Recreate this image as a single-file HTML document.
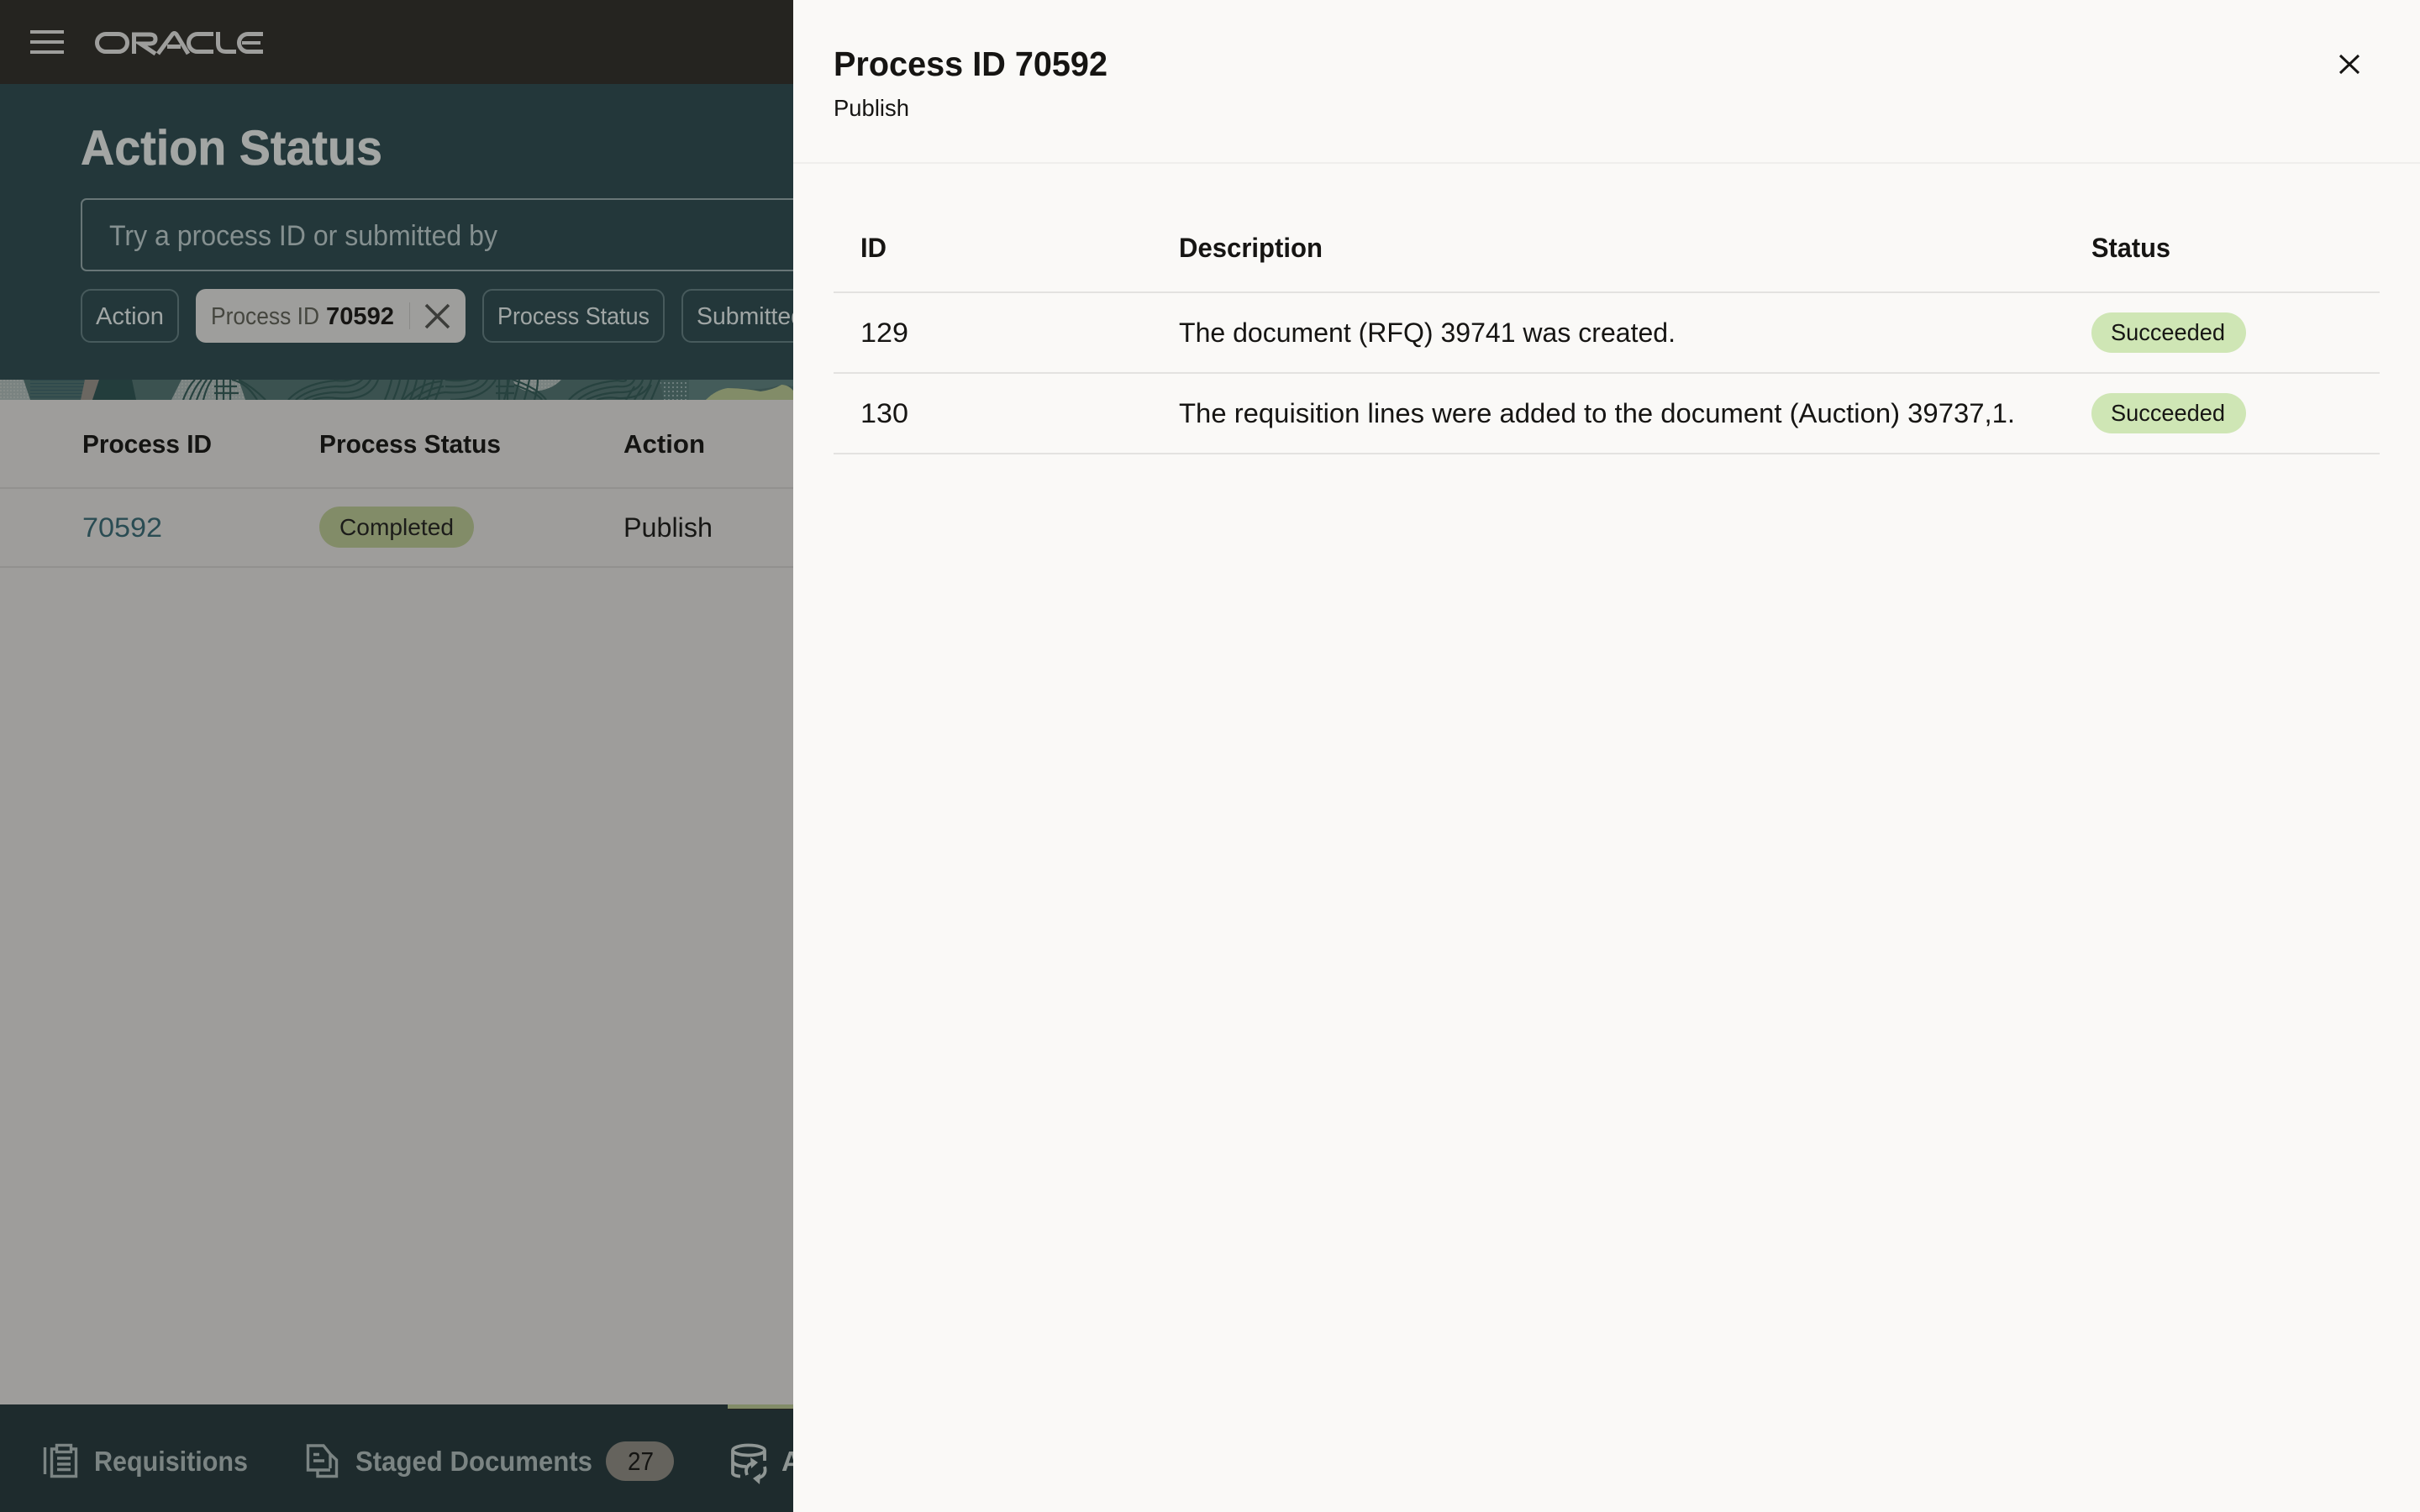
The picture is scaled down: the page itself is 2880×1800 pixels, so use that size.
<!DOCTYPE html>
<html lang="en"><head><meta charset="utf-8"><title>Action Status</title>
<style>
html,body{margin:0;padding:0;width:2880px;height:1800px;overflow:hidden;background:#9e9d9b}
svg{display:block}
text{font-family:"Liberation Sans",sans-serif;}
.b{font-weight:700}
</style></head><body>
<svg width="2880" height="1800" viewBox="0 0 2880 1800" xmlns="http://www.w3.org/2000/svg">
<defs>
<clipPath id="band"><rect x="0" y="452" width="944" height="24"/></clipPath>
<pattern id="dots" width="4" height="4" patternUnits="userSpaceOnUse"><rect width="4" height="4" fill="#7a8381"/><rect width="2" height="2" fill="#868c89"/></pattern>
<pattern id="dots2" width="5" height="5" patternUnits="userSpaceOnUse"><rect width="5" height="5" fill="#3f5755"/><rect width="2" height="2" fill="#6b7c7b"/></pattern>
<pattern id="dots3" width="4" height="4" patternUnits="userSpaceOnUse"><rect width="4" height="4" fill="#395150"/><rect y="0" width="4" height="1" fill="#2c474b"/></pattern>
</defs>
<rect width="2880" height="1800" fill="#9e9d9b"/>
<!-- top bar -->
<rect width="944" height="100" fill="#252420"/>
<rect x="36" y="36" width="40" height="4" fill="#9e9e9c"/><rect x="36" y="48" width="40" height="4" fill="#9e9e9c"/><rect x="36" y="60" width="40" height="4" fill="#9e9e9c"/>
<g fill="none" stroke="#9e9e9c" stroke-width="5">
<title>ORACLE</title>
<rect x="115.500" y="40.500" width="36" height="21" rx="10.500"/>
<path d="M159.500 64V41H178Q185 41 185 46.500Q185 52 178 52H167L185 64"/>
<path d="M188 64L205 41Q207.500 38 210 41L224 64"/>
<path d="M199 55.500H215"/>
<path d="M254 40.500H235a10.500 10.500 0 0 0 0 21H254"/>
<path d="M259.500 38V52Q259.500 61.500 269 61.500H281"/>
<path d="M313 40.500H295a10.500 10.500 0 0 0 0 21H313"/>
<path d="M288 51H310" stroke-width="4"/>
</g>
<!-- teal header -->
<rect y="100" width="944" height="352" fill="#23373a"/>
<text class="b" x="96" y="196" font-size="58" fill="#a3a6a4" stroke="#a3a6a4" stroke-width=".6" textLength="359" lengthAdjust="spacingAndGlyphs">Action Status</text>
<rect x="97" y="237" width="900" height="85" rx="6" fill="none" stroke="#687677" stroke-width="2"/>
<text x="130" y="292" font-size="34" fill="#859090" textLength="462" lengthAdjust="spacingAndGlyphs">Try a process ID or submitted by</text>
<!-- chips -->
<rect x="97" y="345" width="115" height="62" rx="11" fill="none" stroke="#475a5c" stroke-width="2"/>
<text x="114" y="386" font-size="29" fill="#a0a6a5" textLength="81" lengthAdjust="spacingAndGlyphs">Action</text>
<rect x="233" y="344" width="321" height="64" rx="12" fill="#9e9e9c"/>
<text x="251" y="386" font-size="29" fill="#45463f" textLength="129" lengthAdjust="spacingAndGlyphs">Process ID</text>
<text class="b" x="388" y="386" font-size="29" fill="#161513" textLength="81" lengthAdjust="spacingAndGlyphs">70592</text>
<rect x="487" y="360" width="1" height="32" fill="#8a8a88"/>
<path d="M507 363L534 390M534 363L507 390" stroke="#3c3d3a" stroke-width="3.600" fill="none"/>
<rect x="575" y="345" width="215" height="62" rx="11" fill="none" stroke="#475a5c" stroke-width="2"/>
<text x="592" y="386" font-size="29" fill="#a0a6a5" textLength="181" lengthAdjust="spacingAndGlyphs">Process Status</text>
<rect x="812" y="345" width="200" height="62" rx="11" fill="none" stroke="#475a5c" stroke-width="2"/>
<text x="829" y="386" font-size="29" fill="#a0a6a5" textLength="166" lengthAdjust="spacingAndGlyphs">Submitted by</text>
<!-- pattern band -->
<g clip-path="url(#band)">
<rect y="452" width="944" height="24" fill="#3b5250"/>
<rect x="36" y="452" width="64" height="24" fill="url(#dots3)"/>
<path d="M0 452H28L36 476H0Z" fill="url(#dots)"/>
<path d="M101 452H118L110 476H96Z" fill="#6b6761"/>
<path d="M110 476L118 452H157L162 476Z" fill="#233d3c"/>
<path d="M204 476L216 452H284L292 476Z" fill="url(#dots)"/>
<path d="M610 452H668Q655 466 630 466Q615 464 610 452Z" fill="url(#dots)"/>
<path d="M785 452H880L840 476H790Z" fill="url(#dots2)"/>
<path d="M820 452H944V460L930 458Q905 466 880 462Q855 460 840 476H820Z" fill="#445c5a"/>
<path d="M840 476Q852 464 866 462Q885 462 905 466Q920 464 930 458Q938 458 944 465V476Z" fill="#828c68"/>
<g fill="none" stroke="#27423f" stroke-width="2.200">
<path d="M218 476Q224 460 232 452M226 476Q232 460 240 452M234 476Q240 460 246 452M242 476Q246 460 252 452"/>
<path d="M258 452V476M266 452V476M274 452V476M255 460H282M255 468H284"/>
<path d="M284 452Q300 460 316 476M276 452Q294 456 306 476"/>
<path d="M343 476Q362 456 400 453M352 476Q368 462 400 460M362 476Q376 468 400 467M372 476Q384 472 400 474"/>
<path d="M400 453Q415 455 425 448M400 460Q425 462 434 448M400 467Q432 470 442 450M400 474Q440 478 450 452"/>
<path d="M458 476Q464 462 466 452M468 476Q474 462 476 452"/>
<path d="M478 476Q484 462 486 452M488 476Q494 462 496 452M498 476Q504 462 506 452M508 476Q514 462 516 452M518 476Q524 462 526 452"/>
<path d="M480 476Q500 456 525 454M490 476Q510 462 528 460M500 476Q518 468 530 467"/>
<path d="M530 452Q550 455 560 450M530 460Q560 462 570 452M530 467Q570 470 580 452M536 476Q575 476 590 452M600 476Q604 462 606 452M612 476Q616 462 618 452M624 476Q628 462 630 452M636 476Q640 462 640 452"/>
<path d="M594 452V476M604 452V476M590 460H612M590 468H612"/>
<path d="M610 452Q640 462 650 476M612 458Q640 468 645 476"/>
<path d="M677 476Q695 456 735 453M688 476Q705 462 735 460M698 476Q715 468 735 467M710 476Q722 472 735 474"/>
<path d="M735 453Q745 455 745 452M735 460Q750 462 755 452M735 467Q760 468 765 452M735 474Q770 475 775 452M745 476L755 460M755 476L765 460M765 476L775 458M775 476L785 452"/>
</g>
</g>
<!-- results table -->
<text class="b" x="98" y="539" font-size="31" fill="#141412" textLength="154" lengthAdjust="spacingAndGlyphs">Process ID</text>
<text class="b" x="380" y="539" font-size="31" fill="#141412" textLength="216" lengthAdjust="spacingAndGlyphs">Process Status</text>
<text class="b" x="742" y="539" font-size="31" fill="#141412" textLength="97" lengthAdjust="spacingAndGlyphs">Action</text>
<rect y="580" width="944" height="2" fill="#92918f"/>
<text x="98" y="639" font-size="32" fill="#2a4c53" textLength="95" lengthAdjust="spacingAndGlyphs">70592</text>
<rect x="380" y="603" width="184" height="49" rx="24.500" fill="#828c68"/>
<text x="404" y="637" font-size="28" fill="#1c1c1a" textLength="136" lengthAdjust="spacingAndGlyphs">Completed</text>
<text x="742" y="639" font-size="32" fill="#171715" textLength="106" lengthAdjust="spacingAndGlyphs">Publish</text>
<rect y="674" width="944" height="2" fill="#92918f"/>
<!-- footer -->
<rect y="1672" width="944" height="128" fill="#1e2b2d"/>
<rect x="866" y="1672" width="78" height="5" fill="#828c68"/><rect x="866" y="1677" width="78" height="1" fill="#252420"/>
<g fill="none" stroke="#7b8483" stroke-width="3.400">
<path d="M53.500 1723V1755"/>
<path d="M66 1725H61.500V1757.500H90.500V1725H86"/>
<rect x="67.500" y="1720.500" width="17" height="8"/>
<path d="M68 1736H84M68 1743H84M68 1749.500H84" stroke-width="3.600"/>
<path d="M393 1748V1731L385 1721H366.500V1750H393M378 1750V1757.500H400.500V1738L393 1731"/>
<path d="M373 1731.500H380M373 1739H386"/>
</g>
<text class="b" x="112" y="1751" font-size="33" fill="#7b8483" textLength="183" lengthAdjust="spacingAndGlyphs">Requisitions</text>
<text class="b" x="423" y="1751" font-size="33" fill="#7b8483" textLength="282" lengthAdjust="spacingAndGlyphs">Staged Documents</text>
<rect x="721" y="1716" width="81" height="47" rx="23.500" fill="#65635d"/>
<text x="747" y="1750" font-size="31" fill="#141412" textLength="31" lengthAdjust="spacingAndGlyphs">27</text>
<g fill="none" stroke="#8f9694" stroke-width="3.800">
<ellipse cx="891" cy="1726.500" rx="19" ry="6"/>
<path d="M872 1727V1754Q873 1757 881 1757.500M910 1727V1739"/>
<path d="M872 1741Q878 1746 888 1746"/>
<path d="M889 1756Q885 1745 897 1741"/>
<path d="M910 1746Q913 1757 901 1760"/>
</g>
<path d="M893 1735L902 1741L894 1748ZM905 1754L896 1760L904 1767Z" fill="#8f9694"/>
<text class="b" x="930" y="1751" font-size="33" fill="#8f9694">A</text>
<!-- drawer -->
<rect x="944" y="0" width="1936" height="1800" fill="#faf9f7"/>
<text class="b" x="992" y="90" font-size="41" fill="#161513" textLength="326" lengthAdjust="spacingAndGlyphs">Process ID 70592</text>
<text x="992" y="138" font-size="28" fill="#161513" textLength="90" lengthAdjust="spacingAndGlyphs">Publish</text>
<path d="M2785 66L2807 87M2807 66L2785 87" stroke="#161513" stroke-width="3" fill="none"/>
<rect x="944" y="193" width="1936" height="2" fill="#efeeec"/>
<text class="b" x="1024" y="306" font-size="32" fill="#161513" textLength="31" lengthAdjust="spacingAndGlyphs">ID</text>
<text class="b" x="1403" y="306" font-size="32" fill="#161513" textLength="171" lengthAdjust="spacingAndGlyphs">Description</text>
<text class="b" x="2489" y="306" font-size="32" fill="#161513" textLength="94" lengthAdjust="spacingAndGlyphs">Status</text>
<rect x="992" y="347" width="1840" height="2" fill="#e3e2e0"/>
<text x="1024" y="407" font-size="32" fill="#161513" textLength="57" lengthAdjust="spacingAndGlyphs">129</text>
<text x="1403" y="407" font-size="32" fill="#161513" textLength="591" lengthAdjust="spacingAndGlyphs">The document (RFQ) 39741 was created.</text>
<rect x="2489" y="372" width="184" height="48" rx="24" fill="#cfe6b5"/>
<text x="2512" y="405" font-size="28" fill="#161513" textLength="136" lengthAdjust="spacingAndGlyphs">Succeeded</text>
<rect x="992" y="443" width="1840" height="2" fill="#e3e2e0"/>
<text x="1024" y="503" font-size="32" fill="#161513" textLength="57" lengthAdjust="spacingAndGlyphs">130</text>
<text x="1403" y="503" font-size="32" fill="#161513" textLength="995" lengthAdjust="spacingAndGlyphs">The requisition lines were added to the document (Auction) 39737,1.</text>
<rect x="2489" y="468" width="184" height="48" rx="24" fill="#cfe6b5"/>
<text x="2512" y="501" font-size="28" fill="#161513" textLength="136" lengthAdjust="spacingAndGlyphs">Succeeded</text>
<rect x="992" y="539" width="1840" height="2" fill="#e3e2e0"/>
</svg>
</body></html>
